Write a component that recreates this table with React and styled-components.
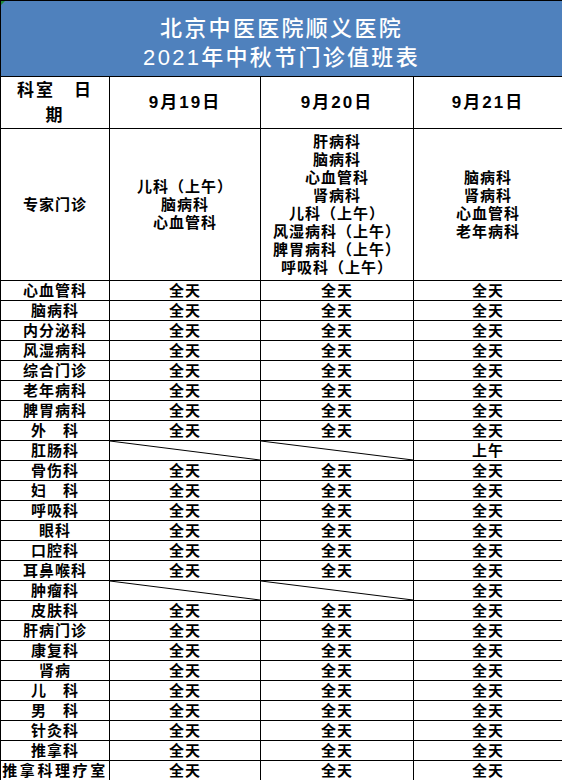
import React from "react";
import styled, { createGlobalStyle, css } from "styled-components";

const GlobalStyle = createGlobalStyle`
  html, body {
    margin: 0;
    padding: 0;
    background: #fff;
  }
  body {
    font-family: "Liberation Sans", "Noto Sans CJK SC", sans-serif;
  }
`;

const Sheet = styled.table`
  width: 562px;
  table-layout: fixed;
  border-collapse: collapse;
  color: #000;
`;

const TitleCell = styled.td`
  position: relative;
  height: 67px;
  padding: 8px 0 0;
  background: #4f81bd;
  border: 1px solid #000;
  color: #fff;
  text-align: center;
  font-size: 22px;
  font-weight: 500;
  line-height: 29px;
  letter-spacing: 2.3px;
  &::before {
    content: "";
    position: absolute;
    left: 0;
    top: 0;
    border-top: 4px solid #1f8a3a;
    border-right: 4px solid transparent;
  }
`;

const Cell = styled.td`
  position: relative;
  border: 1px solid #000;
  padding: 0;
  text-align: center;
  vertical-align: middle;
  font-weight: 700;
  font-size: 15px;
  letter-spacing: 1px;
  line-height: 18px;
  height: 19px;
  white-space: nowrap;
  overflow: hidden;
  ${(p) =>
    p.$spread &&
    css`
      letter-spacing: 2.6px;
    `}
`;

const Slash = styled.svg`
  position: absolute;
  inset: 0;
  width: 100%;
  height: 100%;
  display: block;
`;

const HeadCell = styled(Cell)`
  height: 51px;
  font-size: 17px;
  letter-spacing: 2px;
  line-height: 25px;
`;

const ExpertCell = styled(Cell)`
  height: 151px;
  line-height: 18px;
`;

const Line = styled.div`
  display: block;
`;

const dates = ["9月19日", "9月20日", "9月21日"];

const experts = [
  ["儿科（上午）", "脑病科", "心血管科"],
  [
    "肝病科",
    "脑病科",
    "心血管科",
    "肾病科",
    "儿科（上午）",
    "风湿病科（上午）",
    "脾胃病科（上午）",
    "呼吸科（上午）",
  ],
  ["脑病科", "肾病科", "心血管科", "老年病科"],
];

const ALL = ["全天", "全天", "全天"];

const rows = [
  { name: "心血管科", days: ALL },
  { name: "脑病科", days: ALL },
  { name: "内分泌科", days: ALL },
  { name: "风湿病科", days: ALL },
  { name: "综合门诊", days: ALL },
  { name: "老年病科", days: ALL },
  { name: "脾胃病科", days: ALL },
  { name: "外　科", days: ALL },
  { name: "肛肠科", days: [null, null, "上午"] },
  { name: "骨伤科", days: ALL },
  { name: "妇　科", days: ALL },
  { name: "呼吸科", days: ALL },
  { name: "眼科", days: ALL },
  { name: "口腔科", days: ALL },
  { name: "耳鼻喉科", days: ALL },
  { name: "肿瘤科", days: [null, null, "全天"] },
  { name: "皮肤科", days: ALL },
  { name: "肝病门诊", days: ALL },
  { name: "康复科", days: ALL },
  { name: "肾病", days: ALL },
  { name: "儿　科", days: ALL },
  { name: "男　科", days: ALL },
  { name: "针灸科", days: ALL },
  { name: "推拿科", days: ALL },
  { name: "推拿科理疗室", days: ALL, spread: true },
];

const App = () => {
  return (
    <>
      <GlobalStyle />
      <Sheet>
        <colgroup>
          <col style={{ width: 109 }} />
          <col style={{ width: 151 }} />
          <col style={{ width: 153 }} />
          <col style={{ width: 149 }} />
        </colgroup>
        <tbody>
          <tr>
            <TitleCell colSpan={4}>
              <Line>北京中医医院顺义医院</Line>
              <Line>2021年中秋节门诊值班表</Line>
            </TitleCell>
          </tr>
          <tr>
            <HeadCell>
              <Line>科室　日</Line>
              <Line>期</Line>
            </HeadCell>
            {dates.map((d) => (
              <HeadCell key={d}>{d}</HeadCell>
            ))}
          </tr>
          <tr>
            <ExpertCell>专家门诊</ExpertCell>
            {experts.map((list, i) => (
              <ExpertCell key={i}>
                {list.map((t, j) => (
                  <Line key={j}>{t}</Line>
                ))}
              </ExpertCell>
            ))}
          </tr>
          {rows.map((r) => (
            <tr key={r.name}>
              <Cell $spread={r.spread}>{r.name}</Cell>
              {r.days.map((d, i) => (
                <Cell key={i}>
                  {d === null ? (
                    <Slash viewBox="0 0 100 100" preserveAspectRatio="none">
                      <line
                        x1="0"
                        y1="0"
                        x2="100"
                        y2="100"
                        stroke="#000"
                        strokeWidth="1"
                        vectorEffect="non-scaling-stroke"
                      />
                    </Slash>
                  ) : (
                    d
                  )}
                </Cell>
              ))}
            </tr>
          ))}
        </tbody>
      </Sheet>
    </>
  );
};

export default App;
